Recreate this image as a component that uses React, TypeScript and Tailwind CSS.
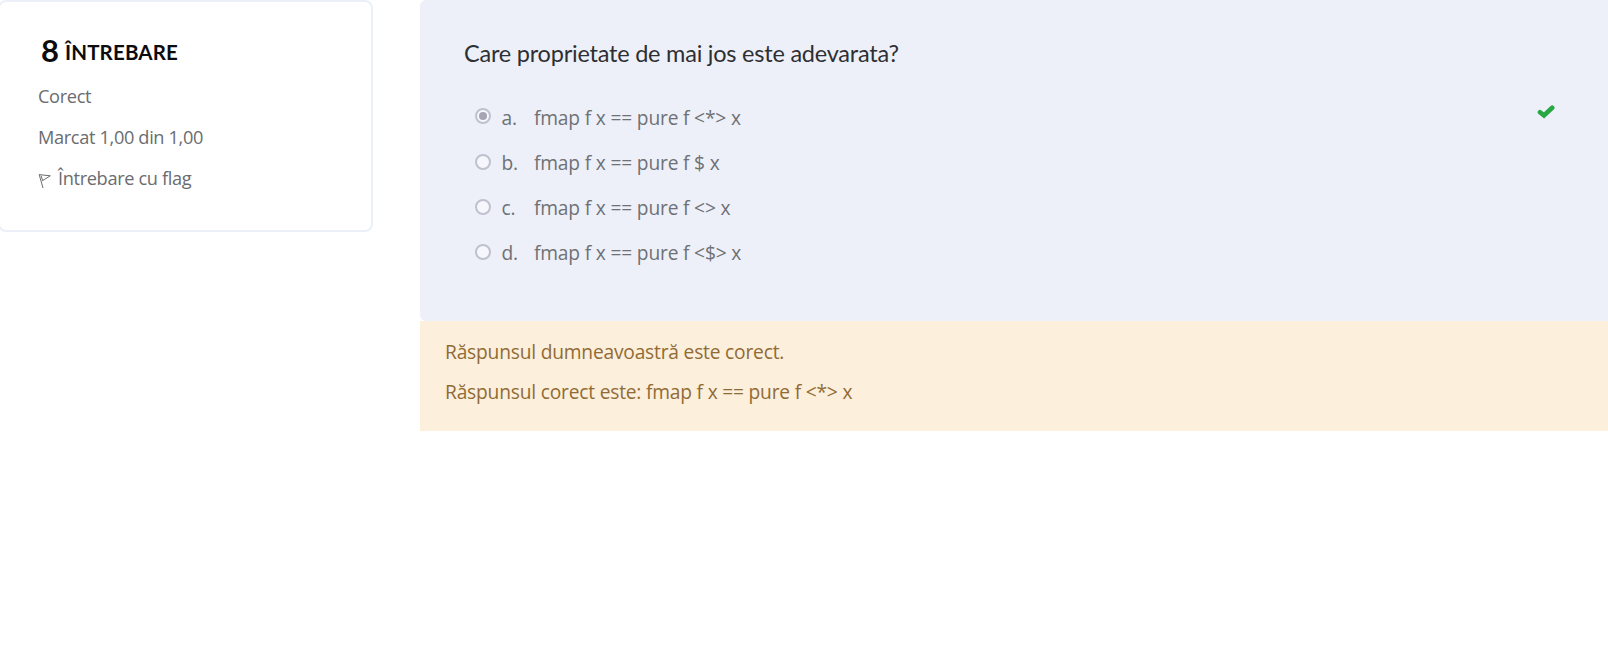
import React from "react";

const options = [
  { letter: "a.", text: "fmap f x == pure f <*> x", checked: true },
  { letter: "b.", text: "fmap f x == pure f $ x", checked: false },
  { letter: "c.", text: "fmap f x == pure f <> x", checked: false },
  { letter: "d.", text: "fmap f x == pure f <$> x", checked: false },
];

function FlagIcon() {
  return (
    <svg width="13" height="16" viewBox="0 0 13 16" fill="none" stroke="#6a6c70" strokeWidth="1" className="mt-1 shrink-0">
      <path d="M1.2 1.6 L5 15 M1.2 1.6 L12.3 2.8 L4.2 7.8 M3 2.6 L4.6 7.4" />
    </svg>
  );
}

function Radio({ checked }: { checked: boolean }) {
  return (
    <span className="flex size-4 shrink-0 items-center justify-center rounded-full border-2 border-[#c0c0cf] bg-[#f6f7fc]">
      {checked && <span className="size-2 rounded-full bg-[#a5a5b5]" />}
    </span>
  );
}

export default function App() {
  return (
    <div className="flex h-[648px] w-full items-start overflow-hidden bg-white font-['Open_Sans',sans-serif] whitespace-nowrap">
      <aside className="-ml-0.5 h-[232px] w-[375px] shrink-0 rounded-lg border-2 border-[#ebeff7] pl-[38px] pt-[33px] text-[18.2px] leading-[41px] tracking-[-0.35px] text-[#6a6c70]">
        <h3 className="flex h-[41px] items-start gap-[6px] pl-[3px] font-['Lato',sans-serif] font-bold leading-[30px] tracking-normal text-[#0c0c0e]">
          <span className="text-[31px]">8</span>
          <span className="pt-0.5 text-[20.5px] tracking-[0.15px]">ÎNTREBARE</span>
        </h3>
        <div>Corect</div>
        <div>Marcat 1,00 din 1,00</div>
        <div className="flex items-center gap-[7px]">
          <FlagIcon />
          <span>Întrebare cu flag</span>
        </div>
      </aside>
      <main className="ml-[47px] flex-1">
        <section className="h-[321px] rounded-l-md bg-[#edf0f8] pl-11 pt-[37px]">
          <h2 className="h-[59px] font-['Lato',sans-serif] text-[23.5px] leading-[32px] tracking-[-0.22px] text-[#2d2f33]">
            Care proprietate de mai jos este adevarata?
          </h2>
          <div className="flex items-start justify-between pl-[11px] pr-[53px]">
            <ul className="text-[19.2px] leading-[43px] tracking-[-0.18px] text-[#6f7175]">
              {options.map((option) => (
                <li key={option.letter} className="flex h-[45px] items-start">
                  <span className={option.checked ? "pt-3" : "pt-[13px]"}>
                    <Radio checked={option.checked} />
                  </span>
                  <span className="w-[33px] pl-[10.5px]">{option.letter}</span>
                  <span className="pl-[10px]">{option.text}</span>
                </li>
              ))}
            </ul>
            <svg width="18" height="14" viewBox="0 0 18 14" fill="none" stroke="#28a745" strokeWidth="4.6" strokeLinecap="round" className="mt-[9px]">
              <path d="M3 7.2 L7 10.4 L15.2 2.8" />
            </svg>
          </div>
        </section>
        <section className="h-[110px] bg-[#fcefdc] pl-[25px] pt-[11px] text-[19.2px] leading-[40px] tracking-[-0.2px] text-[#916b34]">
          <p>Răspunsul dumneavoastră este corect.</p>
          <p>Răspunsul corect este: fmap f x == pure f &lt;*&gt; x</p>
        </section>
      </main>
    </div>
  );
}
